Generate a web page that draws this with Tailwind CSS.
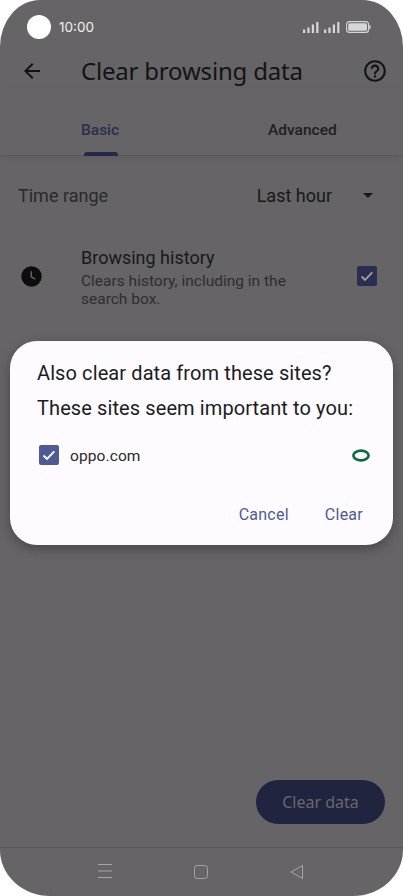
<!DOCTYPE html>
<html><head><meta charset="utf-8"><script src="https://cdn.jsdelivr.net/npm/@tailwindcss/browser@4"></script></head>
<body class="bg-white">
<div class="relative w-[403px] h-[896px] overflow-hidden bg-white font-['Roboto',sans-serif]">
  <div class="relative flex flex-col w-full h-full bg-[#666467] rounded-[40px_40px_50px_50px/47px_47px_46px_46px] overflow-hidden">
    <!-- status bar -->
    <div class="h-[54px] shrink-0 flex items-center pl-[27px] pr-[32px]">
      <div class="w-[24px] h-[24px] rounded-full bg-white"></div>
      <span class="ml-[8px] text-[13.5px] text-white/90 font-['Inter',sans-serif]">10:00</span>
      <div class="ml-auto flex items-center gap-[5px]">
        <svg width="16" height="11" viewBox="0 0 16 11" fill="#d6d5d7"><rect x="0" y="7.5" width="2.2" height="3.5"/><rect x="4.4" y="5.5" width="2.2" height="5.5"/><rect x="8.8" y="2.5" width="2.2" height="8.5"/><rect x="13.2" y="0" width="2.2" height="11"/></svg>
        <svg width="16" height="11" viewBox="0 0 16 11" fill="#d6d5d7"><rect x="0" y="7.5" width="2.2" height="3.5"/><rect x="4.4" y="5.5" width="2.2" height="5.5"/><rect x="8.8" y="2.5" width="2.2" height="8.5"/><rect x="13.2" y="0" width="2.2" height="11"/></svg>
        <svg width="25" height="12" viewBox="0 0 25 12" class="ml-[1px]"><rect x="0.6" y="0.6" width="22" height="10.8" rx="3" fill="none" stroke="#d6d5d7" stroke-width="1.1"/><rect x="2.2" y="2.2" width="18.8" height="7.6" rx="1.6" fill="#d6d5d7"/><rect x="23.2" y="4" width="1.4" height="4" rx="0.7" fill="#d6d5d7"/></svg>
      </div>
    </div>
    <!-- app bar -->
    <div class="h-[34px] shrink-0 flex items-center relative">
      <svg class="ml-[20px]" width="24" height="24" viewBox="0 0 24 24" fill="#121214"><path d="M20 11H7.83l5.59-5.59L12 4l-8 8 8 8 1.41-1.41L7.83 13H20v-2z"/></svg>
      <span class="ml-[37px] text-[24px] leading-[34px] text-[#141416] font-['Noto_Sans',sans-serif] tracking-[-0.2px]">Clear browsing data</span>
      <svg class="ml-auto mr-[15px]" width="26" height="26" viewBox="0 0 24 24" fill="#141416"><path d="M11 18h2v-2h-2v2zm1-16C6.48 2 2 6.48 2 12s4.48 10 10 10 10-4.48 10-10S17.52 2 12 2zm0 18c-4.41 0-8-3.59-8-8s3.59-8 8-8 8 3.59 8 8-3.59 8-8 8zm0-14c-2.21 0-4 1.79-4 4h2c0-1.1.9-2 2-2s2 .9 2 2c0 2-3 1.75-3 5h2c0-2.25 3-2.5 3-5 0-2.21-1.79-4-4-4z"/></svg>
    </div>
    <!-- tabs -->
    <div class="relative h-[68px] shrink-0 flex border-b border-[#5d5b5e] shadow-[0_2px_6px_rgba(0,0,0,0.08)] text-[15.5px] font-medium">
      <div class="relative w-[202px] pl-[81px] pt-[33px] leading-[18px] text-[#2c2f4c]">Basic
        <div class="absolute left-[84px] bottom-[-1px] w-[34px] h-[4px] rounded-t-[3px] bg-[#24284a]"></div>
      </div>
      <div class="flex-1 pl-[66px] pt-[33px] leading-[18px] text-[#1f1f22]">Advanced</div>
    </div>
    <!-- time range -->
    <div class="flex items-center pl-[18px] pr-[30px] mt-[27px] h-[24px] shrink-0">
      <span class="text-[18px] text-[#2a2a2d]">Time range</span>
      <span class="ml-auto text-[18px] text-[#19191b]">Last hour</span>
      <svg class="ml-[31px]" width="10" height="5" viewBox="0 0 10 5" fill="#19191b"><path d="M0 0h10L5 5z"/></svg>
    </div>
    <!-- browsing history -->
    <div class="flex items-center pl-[21px] pr-[26px] mt-[39px] shrink-0">
      <svg width="21" height="21" viewBox="0 0 21 21" class="shrink-0"><circle cx="10.5" cy="10.5" r="10.2" fill="#0d0d0e"/><path d="M10.3 5.2v5.6l3.9 2.3" fill="none" stroke="#666467" stroke-width="1.5"/></svg>
      <div class="ml-[39px] flex-1">
        <div class="text-[18px] leading-[24px] text-[#19191b]">Browsing history</div>
        <div class="text-[15.5px] leading-[18px] text-[#2e2e31] mt-[2px] -mb-[2px]">Clears history, including in the<br>search box.</div>
      </div>
      <div class="w-[20px] h-[20px] rounded-[2px] bg-[#2a2e50] flex items-center justify-center shrink-0">
        <svg width="16" height="16" viewBox="0 0 16 16" fill="none" stroke="#9d9ca0" stroke-width="1.9"><path d="M2.5 8.5l3.5 3.3 7.3-7.5"/></svg>
      </div>
    </div>
    <!-- FAB -->
    <div class="absolute right-[18px] bottom-[72px] w-[129px] h-[44px] pb-[1px] rounded-full bg-[#20243f] flex items-center justify-center text-[16px] text-[#69686c] font-['Noto_Sans',sans-serif]">Clear data</div>
    <!-- nav bar -->
    <div class="absolute left-0 right-0 bottom-0 h-[49px] border-t border-[#5a585b] flex items-center">
      <svg class="absolute left-[97px] top-[15px]" width="16" height="16" viewBox="0 0 16 16" stroke="#a5a4a7" stroke-width="1" fill="none"><path d="M1 1.5h14M1 8h14M1 14.5h14"/></svg>
      <svg class="absolute left-[193px] top-[16px]" width="16" height="16" viewBox="0 0 16 16" stroke="#a5a4a7" stroke-width="1" fill="none"><rect x="1.5" y="1.5" width="13" height="13" rx="3"/></svg>
      <svg class="absolute left-[290px] top-[16px]" width="14" height="16" viewBox="0 0 14 16" stroke="#a5a4a7" stroke-width="1" fill="none"><path d="M1 8l11.5-6.5v13z" stroke-linejoin="round"/></svg>
    </div>
  </div>
  <!-- dialog -->
  <div class="absolute left-[10px] top-[341px] w-[383px] h-[204px] rounded-[27px] bg-[#fdfbff] shadow-[0_4px_12px_rgba(0,0,0,0.3)] flex flex-col pl-[27px] pr-[23px]">
    <div class="mt-[20px] text-[20px] leading-[24px] tracking-[0.1px] text-[#1c1b1f]">Also clear data from these sites?</div>
    <div class="mt-[11px] text-[20px] leading-[24px] tracking-[0.1px] text-[#1c1b1f]">These sites seem important to you:</div>
    <div class="mt-[25px] flex items-center h-[20px] pl-[2px]">
      <div class="w-[20px] h-[20px] rounded-[2px] bg-[#4f5a94] flex items-center justify-center">
        <svg width="16" height="16" viewBox="0 0 16 16" fill="none" stroke="#fff" stroke-width="1.9"><path d="M2.5 8.5l3.5 3.3 7.3-7.5"/></svg>
      </div>
      <span class="ml-[11px] text-[15.5px] leading-[20px] pt-[2px] text-[#2a292d] tracking-[0.1px]">oppo.com</span>
      <svg class="ml-auto" width="18" height="13" viewBox="0 0 18 13"><ellipse cx="9" cy="6.5" rx="7.6" ry="4.9" fill="none" stroke="#0a6b3c" stroke-width="2.6"/></svg>
    </div>
    <div class="mt-[40px] flex justify-end gap-[36px] pr-[7px] text-[16px] leading-[20px] text-[#4f5a94] tracking-[0.25px]">
      <span>Cancel</span><span>Clear</span>
    </div>
  </div>
</div>
</body></html>
